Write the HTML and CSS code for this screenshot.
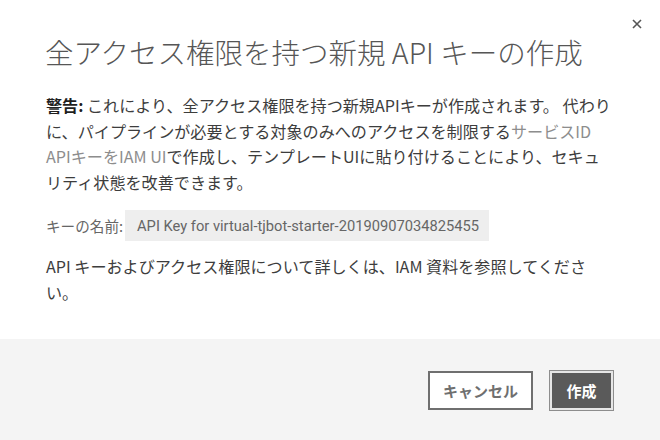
FILE: index.html
```html
<!DOCTYPE html>
<html lang="ja">
<head>
<meta charset="utf-8">
<link rel="stylesheet" href="styles.css">
</head>
<body>
<div class="modal">
  <button class="close" aria-label="閉じる">
    <svg width="10" height="10" viewBox="0 0 10 10"><path d="M1 1L9 9M9 1L1 9" stroke="#555" stroke-width="1.6" fill="none"/></svg>
  </button>
  <div class="modal-body">
    <h1 class="title">全アクセス権限を持つ新規 API キーの作成</h1>
    <p class="text warn"><strong>警告:</strong> これにより、全アクセス権限を持つ新規APIキーが作成されます。 代わり<br>に、パイプラインが必要とする対象のみへのアクセスを制限する<a class="link">サービスID<br>APIキーをIAM UI</a>で作成し、テンプレートUIに貼り付けることにより、セキュ<br>リティ状態を改善できます。</p>
    <div class="keyrow">
      <span class="keylabel">キーの名前:</span>
      <span class="keyname">API Key for virtual-tjbot-starter-20190907034825455</span>
    </div>
    <p class="text more">API キーおよびアクセス権限について詳しくは、IAM 資料を参照してくださ<br>い。</p>
  </div>
  <div class="footer">
    <button class="btn btn-secondary">キャンセル</button>
    <button class="btn btn-primary">作成</button>
  </div>
</div>
</body>
</html>
```
FILE: styles.css
```css
* { box-sizing: border-box; }
html, body { margin: 0; padding: 0; background: #fff; }
body {
  font-family: "Noto Sans CJK JP", "Noto Sans", sans-serif;
  width: 660px;
  height: 440px;
  overflow: hidden;
}
.modal {
  position: relative;
  width: 660px;
  height: 440px;
  display: flex;
  flex-direction: column;
  background: #fff;
}
.close {
  position: absolute;
  top: 19px;
  left: 632px;
  width: 10px;
  height: 10px;
  padding: 0;
  border: 0;
  background: transparent;
  display: flex;
}
.modal-body {
  flex: 1;
  padding: 33px 40px 0 45px;
}
.title {
  margin: 0;
  font-size: 28.5px;
  line-height: 37px;
  font-weight: 300;
  color: #565656;
  white-space: nowrap;
}
.text {
  margin: 0 0 0 1px;
  font-size: 16.1px;
  line-height: 25.6px;
  color: #3d3d3d;
  white-space: nowrap;
}
.warn { margin-top: 23px; }
.warn strong { color: #1f1f1f; font-weight: 700; }
.link { color: #8d8d8d; }
.keyrow {
  display: flex;
  align-items: center;
  margin: 15px 0 0 1px;
  height: 31px;
}
.keylabel {
  font-size: 14.6px;
  color: #666;
  margin-right: 2px;
}
.keyname {
  display: flex;
  align-items: center;
  height: 31px;
  padding: 0 10px 0 12px;
  background: #eeeeee;
  font-family: Roboto, "Liberation Sans", sans-serif;
  font-size: 14.7px;
  color: #666;
}
.more { margin-top: 13px; }
.footer {
  height: 101px;
  background: #f4f4f4;
  display: flex;
  justify-content: flex-end;
  align-items: flex-start;
  gap: 17px;
  padding: 32px 47px 0 0;
}
.btn {
  height: 39px;
  font-family: "Noto Sans CJK JP", sans-serif;
  font-size: 15px;
  font-weight: 700;
  cursor: pointer;
}
.btn-secondary {
  width: 105px;
  border: 2px solid #6f6f6f;
  background: #fff;
  color: #6f6f6f;
}
.btn-primary {
  width: 63px;
  border: 2px solid #e6e6e6;
  outline: 1px solid #8d8d8d;
  background: #5a5a5a;
  color: #fff;
}
```
